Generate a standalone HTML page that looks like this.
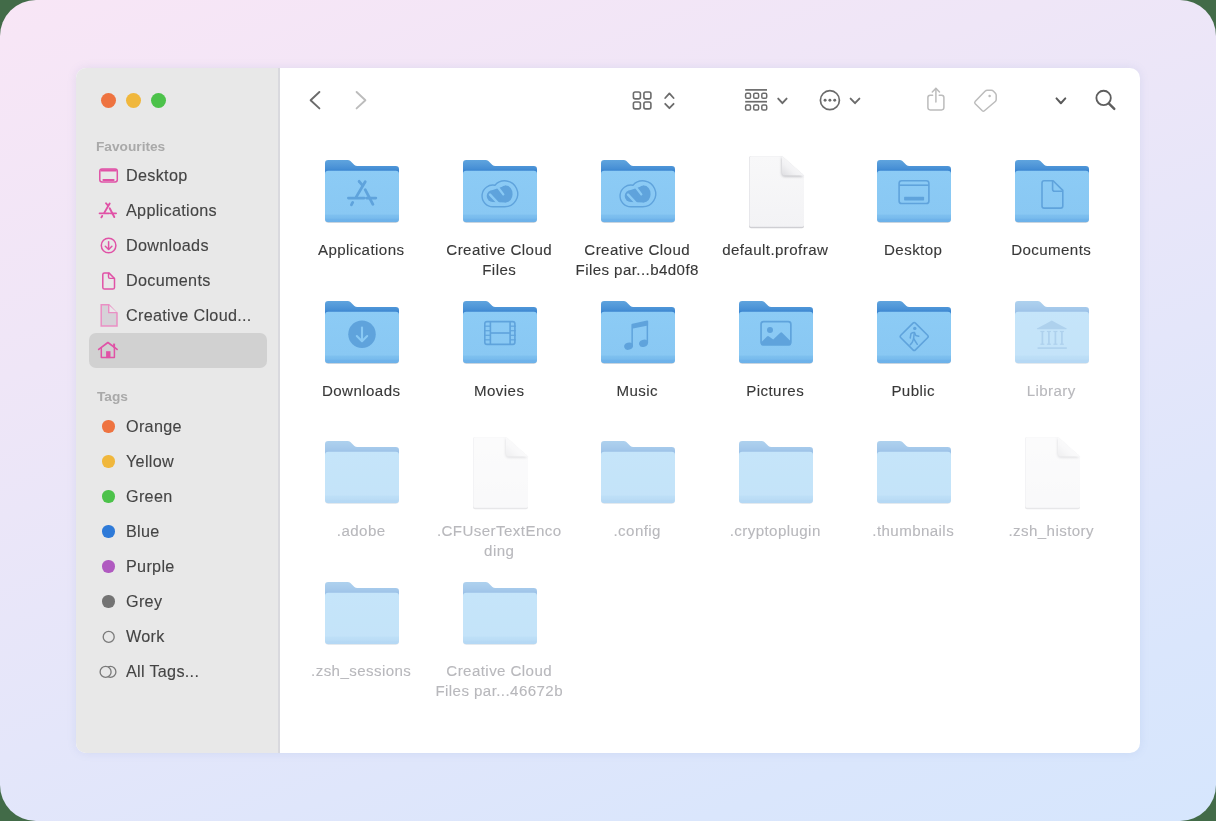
<!DOCTYPE html><html><head><meta charset="utf-8"><style>
html,body{margin:0;padding:0;width:1216px;height:821px;overflow:hidden;background:#426b48;font-family:"Liberation Sans",sans-serif;}
.bg{position:absolute;left:0;top:0;width:1216px;height:821px;border-radius:36px;background:linear-gradient(160deg,#f8e6f6 0%,#efe6f7 30%,#e4e6fa 60%,#dae6fc 85%,#d6e6fd 100%);}
.win{position:absolute;left:76px;top:68px;width:1064px;height:685px;border-radius:10px;overflow:hidden;background:#fff;box-shadow:0 0 10px rgba(100,120,185,0.13);}
.side{position:absolute;left:0;top:0;width:204px;height:685px;background:#e8e8e8;}
.a{position:absolute;}
.t{position:absolute;white-space:nowrap;will-change:transform;}
.sh{font-size:13.7px;font-weight:bold;color:#a9a9a9;line-height:20px;}
.si{font-size:16.2px;letter-spacing:0.3px;color:#444;line-height:20px;-webkit-text-stroke:0.12px #444;}
.lbl{width:160px;text-align:center;font-size:15.1px;letter-spacing:0.42px;text-indent:0.42px;line-height:20px;color:#383838;-webkit-text-stroke:0.12px #383838;}
.lbl.h{color:#b8b8bc;-webkit-text-stroke:0.12px #b8b8bc;}
svg{position:absolute;overflow:visible;}
</style></head><body>
<div class="bg"></div>
<div class="win">
<div class="side">
<div class="a" style="left:202.4px;top:0;width:1.8px;height:685px;background:#d9d9de;"></div>
<div class="a" style="left:25.0px;top:25.200000000000003px;width:15px;height:15px;border-radius:50%;background:#ee7340;"></div>
<div class="a" style="left:50.099999999999994px;top:25.200000000000003px;width:15px;height:15px;border-radius:50%;background:#f0b73c;"></div>
<div class="a" style="left:75.19999999999999px;top:25.200000000000003px;width:15px;height:15px;border-radius:50%;background:#4cc24a;"></div>
<div class="t sh" style="left:19.599999999999994px;top:68.95px;">Favourites</div>
<div class="t sh" style="left:20.5px;top:319.25px;">Tags</div>
<div class="a" style="left:12.599999999999994px;top:264.8px;width:178px;height:35px;border-radius:7px;background:#d1d1d1;"></div>
<div class="t si" style="left:49.900000000000006px;top:97.29px;">Desktop</div>
<div class="t si" style="left:49.900000000000006px;top:132.29px;">Applications</div>
<div class="t si" style="left:49.900000000000006px;top:167.29px;">Downloads</div>
<div class="t si" style="left:49.900000000000006px;top:202.29px;">Documents</div>
<div class="t si" style="left:49.900000000000006px;top:237.29px;">Creative Cloud...</div>
<div class="t si" style="left:49.900000000000006px;top:348.09px;">Orange</div>
<div class="a" style="left:26.39999999999999px;top:352.40px;width:12.4px;height:12.4px;border-radius:50%;background:#ee7340;"></div>
<div class="t si" style="left:49.900000000000006px;top:383.09px;">Yellow</div>
<div class="a" style="left:26.39999999999999px;top:387.40px;width:12.4px;height:12.4px;border-radius:50%;background:#f0b73c;"></div>
<div class="t si" style="left:49.900000000000006px;top:418.09px;">Green</div>
<div class="a" style="left:26.39999999999999px;top:422.40px;width:12.4px;height:12.4px;border-radius:50%;background:#4cc24a;"></div>
<div class="t si" style="left:49.900000000000006px;top:453.09px;">Blue</div>
<div class="a" style="left:26.39999999999999px;top:457.40px;width:12.4px;height:12.4px;border-radius:50%;background:#2e7ad8;"></div>
<div class="t si" style="left:49.900000000000006px;top:488.09px;">Purple</div>
<div class="a" style="left:26.39999999999999px;top:492.40px;width:12.4px;height:12.4px;border-radius:50%;background:#b05ac0;"></div>
<div class="t si" style="left:49.900000000000006px;top:523.09px;">Grey</div>
<div class="a" style="left:26.39999999999999px;top:527.40px;width:12.4px;height:12.4px;border-radius:50%;background:#737373;"></div>
<div class="t si" style="left:49.900000000000006px;top:558.09px;">Work</div>
<div class="t si" style="left:49.900000000000006px;top:593.09px;">All Tags...</div>
<svg style="left:-76px;top:-68px" width="1216" height="821" viewBox="0 0 1216 821"><g fill="none" stroke="#e052a6" stroke-linecap="round" stroke-linejoin="round"><rect x="99.8" y="169" width="17.5" height="12.9" rx="2.2" stroke-width="1.5"/><line x1="100.5" y1="170.4" x2="116.6" y2="170.4" stroke-width="2.2" stroke-linecap="butt"/><circle cx="108.6" cy="245.5" r="7.3" stroke-width="1.5"/><line x1="108.6" y1="241.8" x2="108.6" y2="249.3" stroke-width="1.5"/><path d="M105.3,246.3 L108.6,249.5 L111.9,246.3" stroke-width="1.5"/><path d="M102.8,274.6 Q102.8,272.9 104.5,272.9 H108.9 L114.5,278.5 V287.4 Q114.5,289.1 112.8,289.1 H104.5 Q102.8,289.1 102.8,287.4 Z" stroke-width="1.5"/><path d="M108.5,273.1 V277 Q108.5,278.4 109.9,278.4 H114.3" stroke-width="1.4"/><path d="M101.2,304.8 H108.8 L117,313.2 V326 H101.2 Z" fill="#d6d2d8" stroke="#ea8fc4" stroke-width="1.5" stroke-linejoin="miter"/><path d="M108.7,304.9 V312.6 H116.9" fill="#ebe7ea" stroke="#ea8fc4" stroke-width="1.4" stroke-linejoin="miter"/><path d="M98.7,349.4 L107.9,342.5 L117.1,349.4" stroke-width="1.7"/><path d="M101.3,348 V357.6 H114.4 V347.6" stroke-width="1.5"/><line x1="114.1" y1="343.6" x2="114.1" y2="347.6" stroke-width="2" stroke-linecap="butt"/></g><rect x="106.1" y="351.2" width="4.4" height="6.9" fill="#e052a6"/><rect x="102.4" y="178.9" width="12.2" height="2.1" rx="1" fill="#e052a6"/><g transform="translate(99.6,203.2) scale(0.6) translate(-23.4,-21.2)" stroke="#e052a6" stroke-width="3.2" stroke-linecap="round" fill="none"><line x1="40.2" y1="21.7" x2="31.3" y2="36.9"/><line x1="34.1" y1="21.3" x2="37.1" y2="24.9"/><line x1="40.2" y1="29.7" x2="47.9" y2="44.3"/><line x1="23.4" y1="38.1" x2="39.2" y2="38.1"/><line x1="41.6" y1="38.1" x2="50.8" y2="38.1"/><line x1="27.7" y1="42.4" x2="26.4" y2="44.8"/></g><circle cx="108.7" cy="636.9" r="5.5" fill="none" stroke="#7a7a7a" stroke-width="1.3"/><circle cx="110.4" cy="671.9" r="5.5" fill="none" stroke="#7a7a7a" stroke-width="1.3"/><circle cx="105.6" cy="671.9" r="5.5" fill="#e8e8e8" stroke="#7a7a7a" stroke-width="1.3"/></svg>
</div>
<svg style="left:247px;top:90.4px;opacity:1.0" width="78" height="68" viewBox="-2 -2 78 68"><defs><linearGradient id="bk0" gradientUnits="userSpaceOnUse" x1="0" y1="0" x2="0" y2="11"><stop offset="0" stop-color="#5fa4de"/><stop offset="0.55" stop-color="#4f96d8"/><stop offset="0.8" stop-color="#468fd5"/><stop offset="1" stop-color="#3a84d0"/></linearGradient><linearGradient id="bd0" x1="0" y1="0" x2="0" y2="1"><stop offset="0" stop-color="#8ccbf5"/><stop offset="0.84" stop-color="#89c8f3"/><stop offset="0.86" stop-color="#7ec0ef"/><stop offset="0.92" stop-color="#78bbed"/><stop offset="0.94" stop-color="#6fb3ea"/><stop offset="1" stop-color="#6cb1e9"/></linearGradient></defs><rect x="0.3" y="11.6" width="73.4" height="51.4" rx="3.2" fill="#b9a79b" opacity="0.35"/><path d="M0,3.2 Q0,0 3.2,0 H22.6 Q24.2,0 25.4,1 L29.4,4.9 Q30.6,6 32.2,6 H70.8 Q74,6 74,9.2 V30 H0 Z" fill="url(#bk0)"/><rect x="0" y="10.8" width="74" height="51.5" rx="3.2" fill="url(#bd0)"/><g stroke="#5fa3dc" stroke-width="2.8" stroke-linecap="round" fill="none"><line x1="40.2" y1="21.7" x2="31.3" y2="36.9"/><line x1="34.1" y1="21.3" x2="37.1" y2="24.9"/><line x1="40.2" y1="29.7" x2="47.9" y2="44.3"/><line x1="23.4" y1="38.1" x2="39.2" y2="38.1"/><line x1="41.6" y1="38.1" x2="50.8" y2="38.1"/><line x1="27.7" y1="42.4" x2="26.4" y2="44.8"/></g></svg>
<div class="t lbl" style="left:205.00px;top:172.07px;">Applications</div>
<svg style="left:385px;top:90.4px;opacity:1.0" width="78" height="68" viewBox="-2 -2 78 68"><defs><linearGradient id="bk1" gradientUnits="userSpaceOnUse" x1="0" y1="0" x2="0" y2="11"><stop offset="0" stop-color="#5fa4de"/><stop offset="0.55" stop-color="#4f96d8"/><stop offset="0.8" stop-color="#468fd5"/><stop offset="1" stop-color="#3a84d0"/></linearGradient><linearGradient id="bd1" x1="0" y1="0" x2="0" y2="1"><stop offset="0" stop-color="#8ccbf5"/><stop offset="0.84" stop-color="#89c8f3"/><stop offset="0.86" stop-color="#7ec0ef"/><stop offset="0.92" stop-color="#78bbed"/><stop offset="0.94" stop-color="#6fb3ea"/><stop offset="1" stop-color="#6cb1e9"/></linearGradient></defs><rect x="0.3" y="11.6" width="73.4" height="51.4" rx="3.2" fill="#b9a79b" opacity="0.35"/><path d="M0,3.2 Q0,0 3.2,0 H22.6 Q24.2,0 25.4,1 L29.4,4.9 Q30.6,6 32.2,6 H70.8 Q74,6 74,9.2 V30 H0 Z" fill="url(#bk1)"/><rect x="0" y="10.8" width="74" height="51.5" rx="3.2" fill="url(#bd1)"/><g><path d="M29.9,46.8 A10.9 10.9 0 1 1 31.96,25.19 A13 13 0 1 1 41.7,46.8 Z" fill="none" stroke="#5fa3dc" stroke-width="1.4" stroke-linejoin="round"/><path d="M29.7,30.1 L42.85,25.5 L42.85,42.5 L29.7,42.1 Z" fill="#5fa3dc"/><circle cx="29.7" cy="36.1" r="6" fill="#5fa3dc"/><ellipse cx="42.85" cy="34" rx="6.75" ry="8.5" fill="#5fa3dc"/><line x1="27" y1="34.7" x2="36.3" y2="44.5" stroke="#89c9f4" stroke-width="2.5" stroke-linecap="round"/><line x1="34.1" y1="26.2" x2="40.3" y2="34.4" stroke="#89c9f4" stroke-width="2.3" stroke-linecap="round"/></g></svg>
<div class="t lbl" style="left:343.00px;top:172.07px;">Creative Cloud</div>
<div class="t lbl" style="left:343.00px;top:191.87px;">Files</div>
<svg style="left:523px;top:90.4px;opacity:1.0" width="78" height="68" viewBox="-2 -2 78 68"><defs><linearGradient id="bk2" gradientUnits="userSpaceOnUse" x1="0" y1="0" x2="0" y2="11"><stop offset="0" stop-color="#5fa4de"/><stop offset="0.55" stop-color="#4f96d8"/><stop offset="0.8" stop-color="#468fd5"/><stop offset="1" stop-color="#3a84d0"/></linearGradient><linearGradient id="bd2" x1="0" y1="0" x2="0" y2="1"><stop offset="0" stop-color="#8ccbf5"/><stop offset="0.84" stop-color="#89c8f3"/><stop offset="0.86" stop-color="#7ec0ef"/><stop offset="0.92" stop-color="#78bbed"/><stop offset="0.94" stop-color="#6fb3ea"/><stop offset="1" stop-color="#6cb1e9"/></linearGradient></defs><rect x="0.3" y="11.6" width="73.4" height="51.4" rx="3.2" fill="#b9a79b" opacity="0.35"/><path d="M0,3.2 Q0,0 3.2,0 H22.6 Q24.2,0 25.4,1 L29.4,4.9 Q30.6,6 32.2,6 H70.8 Q74,6 74,9.2 V30 H0 Z" fill="url(#bk2)"/><rect x="0" y="10.8" width="74" height="51.5" rx="3.2" fill="url(#bd2)"/><g><path d="M29.9,46.8 A10.9 10.9 0 1 1 31.96,25.19 A13 13 0 1 1 41.7,46.8 Z" fill="none" stroke="#5fa3dc" stroke-width="1.4" stroke-linejoin="round"/><path d="M29.7,30.1 L42.85,25.5 L42.85,42.5 L29.7,42.1 Z" fill="#5fa3dc"/><circle cx="29.7" cy="36.1" r="6" fill="#5fa3dc"/><ellipse cx="42.85" cy="34" rx="6.75" ry="8.5" fill="#5fa3dc"/><line x1="27" y1="34.7" x2="36.3" y2="44.5" stroke="#89c9f4" stroke-width="2.5" stroke-linecap="round"/><line x1="34.1" y1="26.2" x2="40.3" y2="34.4" stroke="#89c9f4" stroke-width="2.3" stroke-linecap="round"/></g></svg>
<div class="t lbl" style="left:481.00px;top:172.07px;">Creative Cloud</div>
<div class="t lbl" style="left:481.00px;top:191.87px;">Files par...b4d0f8</div>
<svg style="left:668.5px;top:84.0px;opacity:1.0" width="63" height="79.2" viewBox="-4 -4 63 79.2"><defs><linearGradient id="pg3" x1="0" y1="0" x2="0" y2="1"><stop offset="0" stop-color="#f8f8f9"/><stop offset="1" stop-color="#f3f3f5"/></linearGradient><linearGradient id="fd3" x1="0" y1="1" x2="1" y2="0"><stop offset="0" stop-color="#dedee1"/><stop offset="0.35" stop-color="#f2f2f4"/><stop offset="1" stop-color="#ffffff"/></linearGradient><filter id="bl3" x="-50%" y="-50%" width="200%" height="200%"><feGaussianBlur stdDeviation="1.1"/></filter><filter id="bs3" x="-20%" y="-20%" width="140%" height="140%"><feGaussianBlur stdDeviation="0.5"/></filter></defs><path d="M2,1 H33 L55,20.6 V70.2 Q55,72.2 53,72.2 H2 Q0,72.2 0,70.2 V3 Q0,1 2,1 Z" fill="#c4c4c9" opacity="0.8" filter="url(#bs3)"/><path d="M2,0 H33 L55,19.6 V69 Q55,71 53,71 H2 Q0,71 0,69 V2 Q0,0 2,0 Z" fill="#e4e4e8"/><path d="M2.2,0.2 H33 L55,19.8 V69 Q55,70.6 53.4,70.6 H2.4 Q0.8,70.6 0.8,69 V2 Q0.8,0.2 2.2,0.2 Z" fill="url(#pg3)"/><path d="M33,0 V16 Q33,20 37,20 H55 Z" fill="#70707a" opacity="0.35" filter="url(#bl3)" transform="translate(-0.6,1)"/><path d="M33,0 V16.4 Q33,19.6 36.2,19.6 H55 Z" fill="url(#fd3)"/></svg>
<div class="t lbl" style="left:619.00px;top:172.07px;">default.profraw</div>
<svg style="left:799px;top:90.4px;opacity:1.0" width="78" height="68" viewBox="-2 -2 78 68"><defs><linearGradient id="bk4" gradientUnits="userSpaceOnUse" x1="0" y1="0" x2="0" y2="11"><stop offset="0" stop-color="#5fa4de"/><stop offset="0.55" stop-color="#4f96d8"/><stop offset="0.8" stop-color="#468fd5"/><stop offset="1" stop-color="#3a84d0"/></linearGradient><linearGradient id="bd4" x1="0" y1="0" x2="0" y2="1"><stop offset="0" stop-color="#8ccbf5"/><stop offset="0.84" stop-color="#89c8f3"/><stop offset="0.86" stop-color="#7ec0ef"/><stop offset="0.92" stop-color="#78bbed"/><stop offset="0.94" stop-color="#6fb3ea"/><stop offset="1" stop-color="#6cb1e9"/></linearGradient></defs><rect x="0.3" y="11.6" width="73.4" height="51.4" rx="3.2" fill="#b9a79b" opacity="0.35"/><path d="M0,3.2 Q0,0 3.2,0 H22.6 Q24.2,0 25.4,1 L29.4,4.9 Q30.6,6 32.2,6 H70.8 Q74,6 74,9.2 V30 H0 Z" fill="url(#bk4)"/><rect x="0" y="10.8" width="74" height="51.5" rx="3.2" fill="url(#bd4)"/><g fill="none" stroke="#5fa3dc" stroke-width="1.6"><rect x="22.1" y="20.8" width="29.8" height="22.7" rx="2.6"/><line x1="22.1" y1="25.2" x2="51.9" y2="25.2"/></g><rect x="27.1" y="36.8" width="20" height="3.6" rx="0.6" fill="#5fa3dc"/></svg>
<div class="t lbl" style="left:757.00px;top:172.07px;">Desktop</div>
<svg style="left:937px;top:90.4px;opacity:1.0" width="78" height="68" viewBox="-2 -2 78 68"><defs><linearGradient id="bk5" gradientUnits="userSpaceOnUse" x1="0" y1="0" x2="0" y2="11"><stop offset="0" stop-color="#5fa4de"/><stop offset="0.55" stop-color="#4f96d8"/><stop offset="0.8" stop-color="#468fd5"/><stop offset="1" stop-color="#3a84d0"/></linearGradient><linearGradient id="bd5" x1="0" y1="0" x2="0" y2="1"><stop offset="0" stop-color="#8ccbf5"/><stop offset="0.84" stop-color="#89c8f3"/><stop offset="0.86" stop-color="#7ec0ef"/><stop offset="0.92" stop-color="#78bbed"/><stop offset="0.94" stop-color="#6fb3ea"/><stop offset="1" stop-color="#6cb1e9"/></linearGradient></defs><rect x="0.3" y="11.6" width="73.4" height="51.4" rx="3.2" fill="#b9a79b" opacity="0.35"/><path d="M0,3.2 Q0,0 3.2,0 H22.6 Q24.2,0 25.4,1 L29.4,4.9 Q30.6,6 32.2,6 H70.8 Q74,6 74,9.2 V30 H0 Z" fill="url(#bk5)"/><rect x="0" y="10.8" width="74" height="51.5" rx="3.2" fill="url(#bd5)"/><g fill="none" stroke="#5fa3dc" stroke-width="1.6" stroke-linejoin="round"><path d="M27,23 Q27,20.8 29.2,20.8 H38.1 L47.8,30.4 V45.9 Q47.8,48.1 45.6,48.1 H29.2 Q27,48.1 27,45.9 Z"/><path d="M37.6,21 V29.2 Q37.6,31.2 39.6,31.2 H47.6"/></g></svg>
<div class="t lbl" style="left:895.00px;top:172.07px;">Documents</div>
<svg style="left:247px;top:231.0px;opacity:1.0" width="78" height="68" viewBox="-2 -2 78 68"><defs><linearGradient id="bk6" gradientUnits="userSpaceOnUse" x1="0" y1="0" x2="0" y2="11"><stop offset="0" stop-color="#5fa4de"/><stop offset="0.55" stop-color="#4f96d8"/><stop offset="0.8" stop-color="#468fd5"/><stop offset="1" stop-color="#3a84d0"/></linearGradient><linearGradient id="bd6" x1="0" y1="0" x2="0" y2="1"><stop offset="0" stop-color="#8ccbf5"/><stop offset="0.84" stop-color="#89c8f3"/><stop offset="0.86" stop-color="#7ec0ef"/><stop offset="0.92" stop-color="#78bbed"/><stop offset="0.94" stop-color="#6fb3ea"/><stop offset="1" stop-color="#6cb1e9"/></linearGradient></defs><rect x="0.3" y="11.6" width="73.4" height="51.4" rx="3.2" fill="#b9a79b" opacity="0.35"/><path d="M0,3.2 Q0,0 3.2,0 H22.6 Q24.2,0 25.4,1 L29.4,4.9 Q30.6,6 32.2,6 H70.8 Q74,6 74,9.2 V30 H0 Z" fill="url(#bk6)"/><rect x="0" y="10.8" width="74" height="51.5" rx="3.2" fill="url(#bd6)"/><circle cx="37" cy="33.2" r="13.75" fill="#5fa3dc"/><g stroke="#89c9f4" stroke-width="2.1" stroke-linecap="round" stroke-linejoin="round" fill="none"><line x1="37" y1="26.5" x2="37" y2="39.5"/><path d="M31.8,35 L37,40.2 L42.2,35"/></g></svg>
<div class="t lbl" style="left:205.00px;top:312.67px;">Downloads</div>
<svg style="left:385px;top:231.0px;opacity:1.0" width="78" height="68" viewBox="-2 -2 78 68"><defs><linearGradient id="bk7" gradientUnits="userSpaceOnUse" x1="0" y1="0" x2="0" y2="11"><stop offset="0" stop-color="#5fa4de"/><stop offset="0.55" stop-color="#4f96d8"/><stop offset="0.8" stop-color="#468fd5"/><stop offset="1" stop-color="#3a84d0"/></linearGradient><linearGradient id="bd7" x1="0" y1="0" x2="0" y2="1"><stop offset="0" stop-color="#8ccbf5"/><stop offset="0.84" stop-color="#89c8f3"/><stop offset="0.86" stop-color="#7ec0ef"/><stop offset="0.92" stop-color="#78bbed"/><stop offset="0.94" stop-color="#6fb3ea"/><stop offset="1" stop-color="#6cb1e9"/></linearGradient></defs><rect x="0.3" y="11.6" width="73.4" height="51.4" rx="3.2" fill="#b9a79b" opacity="0.35"/><path d="M0,3.2 Q0,0 3.2,0 H22.6 Q24.2,0 25.4,1 L29.4,4.9 Q30.6,6 32.2,6 H70.8 Q74,6 74,9.2 V30 H0 Z" fill="url(#bk7)"/><rect x="0" y="10.8" width="74" height="51.5" rx="3.2" fill="url(#bd7)"/><g fill="none" stroke="#5fa3dc" stroke-width="1.6"><rect x="21.8" y="20.6" width="30.1" height="22.8" rx="2.2"/><line x1="27.4" y1="20.6" x2="27.4" y2="43.4"/><line x1="47.1" y1="20.6" x2="47.1" y2="43.4"/><line x1="27.4" y1="32" x2="47.1" y2="32"/></g><g stroke="#5fa3dc" stroke-width="1.2"><line x1="21.8" y1="25.16" x2="27.4" y2="25.16"/><line x1="47.1" y1="25.16" x2="52.7" y2="25.16"/><line x1="21.8" y1="29.72" x2="27.4" y2="29.72"/><line x1="47.1" y1="29.72" x2="52.7" y2="29.72"/><line x1="21.8" y1="34.28" x2="27.4" y2="34.28"/><line x1="47.1" y1="34.28" x2="52.7" y2="34.28"/><line x1="21.8" y1="38.84" x2="27.4" y2="38.84"/><line x1="47.1" y1="38.84" x2="52.7" y2="38.84"/></g></svg>
<div class="t lbl" style="left:343.00px;top:312.67px;">Movies</div>
<svg style="left:523px;top:231.0px;opacity:1.0" width="78" height="68" viewBox="-2 -2 78 68"><defs><linearGradient id="bk8" gradientUnits="userSpaceOnUse" x1="0" y1="0" x2="0" y2="11"><stop offset="0" stop-color="#5fa4de"/><stop offset="0.55" stop-color="#4f96d8"/><stop offset="0.8" stop-color="#468fd5"/><stop offset="1" stop-color="#3a84d0"/></linearGradient><linearGradient id="bd8" x1="0" y1="0" x2="0" y2="1"><stop offset="0" stop-color="#8ccbf5"/><stop offset="0.84" stop-color="#89c8f3"/><stop offset="0.86" stop-color="#7ec0ef"/><stop offset="0.92" stop-color="#78bbed"/><stop offset="0.94" stop-color="#6fb3ea"/><stop offset="1" stop-color="#6cb1e9"/></linearGradient></defs><rect x="0.3" y="11.6" width="73.4" height="51.4" rx="3.2" fill="#b9a79b" opacity="0.35"/><path d="M0,3.2 Q0,0 3.2,0 H22.6 Q24.2,0 25.4,1 L29.4,4.9 Q30.6,6 32.2,6 H70.8 Q74,6 74,9.2 V30 H0 Z" fill="url(#bk8)"/><rect x="0" y="10.8" width="74" height="51.5" rx="3.2" fill="url(#bd8)"/><g fill="#5fa3dc"><path d="M30.4,23.8 Q30.4,22.9 31.3,22.7 L46,19.6 Q47.1,19.4 47.1,20.5 V24.4 L31.9,27.6 V44 H30.4 Z"/><rect x="45.6" y="20" width="1.5" height="22"/><ellipse cx="27.6" cy="45.2" rx="4.5" ry="3.5" transform="rotate(-18 27.6 45.2)"/><ellipse cx="42.5" cy="42.3" rx="4.5" ry="3.5" transform="rotate(-18 42.5 42.3)"/></g></svg>
<div class="t lbl" style="left:481.00px;top:312.67px;">Music</div>
<svg style="left:661px;top:231.0px;opacity:1.0" width="78" height="68" viewBox="-2 -2 78 68"><defs><linearGradient id="bk9" gradientUnits="userSpaceOnUse" x1="0" y1="0" x2="0" y2="11"><stop offset="0" stop-color="#5fa4de"/><stop offset="0.55" stop-color="#4f96d8"/><stop offset="0.8" stop-color="#468fd5"/><stop offset="1" stop-color="#3a84d0"/></linearGradient><linearGradient id="bd9" x1="0" y1="0" x2="0" y2="1"><stop offset="0" stop-color="#8ccbf5"/><stop offset="0.84" stop-color="#89c8f3"/><stop offset="0.86" stop-color="#7ec0ef"/><stop offset="0.92" stop-color="#78bbed"/><stop offset="0.94" stop-color="#6fb3ea"/><stop offset="1" stop-color="#6cb1e9"/></linearGradient></defs><rect x="0.3" y="11.6" width="73.4" height="51.4" rx="3.2" fill="#b9a79b" opacity="0.35"/><path d="M0,3.2 Q0,0 3.2,0 H22.6 Q24.2,0 25.4,1 L29.4,4.9 Q30.6,6 32.2,6 H70.8 Q74,6 74,9.2 V30 H0 Z" fill="url(#bk9)"/><rect x="0" y="10.8" width="74" height="51.5" rx="3.2" fill="url(#bd9)"/><rect x="22.05" y="20.65" width="29.8" height="23" rx="2.6" fill="none" stroke="#5fa3dc" stroke-width="1.7"/><circle cx="31" cy="29" r="3" fill="#5fa3dc"/><path d="M22,41.5 L28,35.6 Q29,34.7 30,35.5 L34.2,38.6 L41.3,31.7 Q42.2,30.9 43.1,31.7 L52,40.4 V43 Q52,44.5 50.5,44.5 H23.5 Q22,44.5 22,43 Z" fill="#5fa3dc"/></svg>
<div class="t lbl" style="left:619.00px;top:312.67px;">Pictures</div>
<svg style="left:799px;top:231.0px;opacity:1.0" width="78" height="68" viewBox="-2 -2 78 68"><defs><linearGradient id="bk10" gradientUnits="userSpaceOnUse" x1="0" y1="0" x2="0" y2="11"><stop offset="0" stop-color="#5fa4de"/><stop offset="0.55" stop-color="#4f96d8"/><stop offset="0.8" stop-color="#468fd5"/><stop offset="1" stop-color="#3a84d0"/></linearGradient><linearGradient id="bd10" x1="0" y1="0" x2="0" y2="1"><stop offset="0" stop-color="#8ccbf5"/><stop offset="0.84" stop-color="#89c8f3"/><stop offset="0.86" stop-color="#7ec0ef"/><stop offset="0.92" stop-color="#78bbed"/><stop offset="0.94" stop-color="#6fb3ea"/><stop offset="1" stop-color="#6cb1e9"/></linearGradient></defs><rect x="0.3" y="11.6" width="73.4" height="51.4" rx="3.2" fill="#b9a79b" opacity="0.35"/><path d="M0,3.2 Q0,0 3.2,0 H22.6 Q24.2,0 25.4,1 L29.4,4.9 Q30.6,6 32.2,6 H70.8 Q74,6 74,9.2 V30 H0 Z" fill="url(#bk10)"/><rect x="0" y="10.8" width="74" height="51.5" rx="3.2" fill="url(#bd10)"/><path d="M36,22.1 Q37.2,20.9 38.4,22.1 L50.6,34.3 Q51.8,35.5 50.6,36.7 L38.4,48.9 Q37.2,50.1 36,48.9 L23.8,36.7 Q22.6,35.5 23.8,34.3 Z" fill="none" stroke="#5fa3dc" stroke-width="1.6"/><circle cx="37.8" cy="27.4" r="1.7" fill="#5fa3dc"/><g fill="none" stroke="#5fa3dc" stroke-width="1.5" stroke-linecap="round" stroke-linejoin="round"><path d="M33.2,37 L34,32.6 Q36,31 37.5,31.5 L38.8,34.5 L41.8,35.2"/><path d="M37.3,31.8 L36.6,37.5 L40.3,43.3"/><path d="M36.6,37.8 L35.3,41.2 L33.3,43.8"/></g></svg>
<div class="t lbl" style="left:757.00px;top:312.67px;">Public</div>
<svg style="left:937px;top:231.0px;opacity:0.5" width="78" height="68" viewBox="-2 -2 78 68"><defs><linearGradient id="bk11" gradientUnits="userSpaceOnUse" x1="0" y1="0" x2="0" y2="11"><stop offset="0" stop-color="#5fa4de"/><stop offset="0.55" stop-color="#4f96d8"/><stop offset="0.8" stop-color="#468fd5"/><stop offset="1" stop-color="#3a84d0"/></linearGradient><linearGradient id="bd11" x1="0" y1="0" x2="0" y2="1"><stop offset="0" stop-color="#8ccbf5"/><stop offset="0.84" stop-color="#89c8f3"/><stop offset="0.86" stop-color="#7ec0ef"/><stop offset="0.92" stop-color="#78bbed"/><stop offset="0.94" stop-color="#6fb3ea"/><stop offset="1" stop-color="#6cb1e9"/></linearGradient></defs><rect x="0.3" y="11.6" width="73.4" height="51.4" rx="3.2" fill="#b9a79b" opacity="0.35"/><path d="M0,3.2 Q0,0 3.2,0 H22.6 Q24.2,0 25.4,1 L29.4,4.9 Q30.6,6 32.2,6 H70.8 Q74,6 74,9.2 V30 H0 Z" fill="url(#bk11)"/><rect x="0" y="10.8" width="74" height="51.5" rx="3.2" fill="url(#bd11)"/><g fill="#5fa3dc"><path d="M36.8,19.6 L51.7,27.6 Q51.9,28.2 51.3,28.3 H22.3 Q21.7,28.2 21.9,27.6 Z"/><rect x="26.55" y="30" width="1.7" height="13.5"/><rect x="25.40" y="29.9" width="4" height="1.2"/><rect x="25.40" y="42.6" width="4" height="1.2"/><rect x="33.05" y="30" width="1.7" height="13.5"/><rect x="31.90" y="29.9" width="4" height="1.2"/><rect x="31.90" y="42.6" width="4" height="1.2"/><rect x="39.55" y="30" width="1.7" height="13.5"/><rect x="38.40" y="29.9" width="4" height="1.2"/><rect x="38.40" y="42.6" width="4" height="1.2"/><rect x="46.05" y="30" width="1.7" height="13.5"/><rect x="44.90" y="29.9" width="4" height="1.2"/><rect x="44.90" y="42.6" width="4" height="1.2"/><rect x="22.6" y="46.3" width="29.2" height="1.6"/></g></svg>
<div class="t lbl h" style="left:895.00px;top:312.67px;">Library</div>
<svg style="left:247px;top:371.3px;opacity:0.5" width="78" height="68" viewBox="-2 -2 78 68"><defs><linearGradient id="bk12" gradientUnits="userSpaceOnUse" x1="0" y1="0" x2="0" y2="11"><stop offset="0" stop-color="#5fa4de"/><stop offset="0.55" stop-color="#4f96d8"/><stop offset="0.8" stop-color="#468fd5"/><stop offset="1" stop-color="#3a84d0"/></linearGradient><linearGradient id="bd12" x1="0" y1="0" x2="0" y2="1"><stop offset="0" stop-color="#8ccbf5"/><stop offset="0.84" stop-color="#89c8f3"/><stop offset="0.86" stop-color="#7ec0ef"/><stop offset="0.92" stop-color="#78bbed"/><stop offset="0.94" stop-color="#6fb3ea"/><stop offset="1" stop-color="#6cb1e9"/></linearGradient></defs><rect x="0.3" y="11.6" width="73.4" height="51.4" rx="3.2" fill="#b9a79b" opacity="0.35"/><path d="M0,3.2 Q0,0 3.2,0 H22.6 Q24.2,0 25.4,1 L29.4,4.9 Q30.6,6 32.2,6 H70.8 Q74,6 74,9.2 V30 H0 Z" fill="url(#bk12)"/><rect x="0" y="10.8" width="74" height="51.5" rx="3.2" fill="url(#bd12)"/></svg>
<div class="t lbl h" style="left:205.00px;top:452.97px;">.adobe</div>
<svg style="left:392.5px;top:364.90000000000003px;opacity:0.5" width="63" height="79.2" viewBox="-4 -4 63 79.2"><defs><linearGradient id="pg13" x1="0" y1="0" x2="0" y2="1"><stop offset="0" stop-color="#f8f8f9"/><stop offset="1" stop-color="#f3f3f5"/></linearGradient><linearGradient id="fd13" x1="0" y1="1" x2="1" y2="0"><stop offset="0" stop-color="#dedee1"/><stop offset="0.35" stop-color="#f2f2f4"/><stop offset="1" stop-color="#ffffff"/></linearGradient><filter id="bl13" x="-50%" y="-50%" width="200%" height="200%"><feGaussianBlur stdDeviation="1.1"/></filter><filter id="bs13" x="-20%" y="-20%" width="140%" height="140%"><feGaussianBlur stdDeviation="0.5"/></filter></defs><path d="M2,1 H33 L55,20.6 V70.2 Q55,72.2 53,72.2 H2 Q0,72.2 0,70.2 V3 Q0,1 2,1 Z" fill="#c4c4c9" opacity="0.8" filter="url(#bs13)"/><path d="M2,0 H33 L55,19.6 V69 Q55,71 53,71 H2 Q0,71 0,69 V2 Q0,0 2,0 Z" fill="#e4e4e8"/><path d="M2.2,0.2 H33 L55,19.8 V69 Q55,70.6 53.4,70.6 H2.4 Q0.8,70.6 0.8,69 V2 Q0.8,0.2 2.2,0.2 Z" fill="url(#pg13)"/><path d="M33,0 V16 Q33,20 37,20 H55 Z" fill="#70707a" opacity="0.35" filter="url(#bl13)" transform="translate(-0.6,1)"/><path d="M33,0 V16.4 Q33,19.6 36.2,19.6 H55 Z" fill="url(#fd13)"/></svg>
<div class="t lbl h" style="left:343.00px;top:452.97px;">.CFUserTextEnco</div>
<div class="t lbl h" style="left:343.00px;top:472.77px;">ding</div>
<svg style="left:523px;top:371.3px;opacity:0.5" width="78" height="68" viewBox="-2 -2 78 68"><defs><linearGradient id="bk14" gradientUnits="userSpaceOnUse" x1="0" y1="0" x2="0" y2="11"><stop offset="0" stop-color="#5fa4de"/><stop offset="0.55" stop-color="#4f96d8"/><stop offset="0.8" stop-color="#468fd5"/><stop offset="1" stop-color="#3a84d0"/></linearGradient><linearGradient id="bd14" x1="0" y1="0" x2="0" y2="1"><stop offset="0" stop-color="#8ccbf5"/><stop offset="0.84" stop-color="#89c8f3"/><stop offset="0.86" stop-color="#7ec0ef"/><stop offset="0.92" stop-color="#78bbed"/><stop offset="0.94" stop-color="#6fb3ea"/><stop offset="1" stop-color="#6cb1e9"/></linearGradient></defs><rect x="0.3" y="11.6" width="73.4" height="51.4" rx="3.2" fill="#b9a79b" opacity="0.35"/><path d="M0,3.2 Q0,0 3.2,0 H22.6 Q24.2,0 25.4,1 L29.4,4.9 Q30.6,6 32.2,6 H70.8 Q74,6 74,9.2 V30 H0 Z" fill="url(#bk14)"/><rect x="0" y="10.8" width="74" height="51.5" rx="3.2" fill="url(#bd14)"/></svg>
<div class="t lbl h" style="left:481.00px;top:452.97px;">.config</div>
<svg style="left:661px;top:371.3px;opacity:0.5" width="78" height="68" viewBox="-2 -2 78 68"><defs><linearGradient id="bk15" gradientUnits="userSpaceOnUse" x1="0" y1="0" x2="0" y2="11"><stop offset="0" stop-color="#5fa4de"/><stop offset="0.55" stop-color="#4f96d8"/><stop offset="0.8" stop-color="#468fd5"/><stop offset="1" stop-color="#3a84d0"/></linearGradient><linearGradient id="bd15" x1="0" y1="0" x2="0" y2="1"><stop offset="0" stop-color="#8ccbf5"/><stop offset="0.84" stop-color="#89c8f3"/><stop offset="0.86" stop-color="#7ec0ef"/><stop offset="0.92" stop-color="#78bbed"/><stop offset="0.94" stop-color="#6fb3ea"/><stop offset="1" stop-color="#6cb1e9"/></linearGradient></defs><rect x="0.3" y="11.6" width="73.4" height="51.4" rx="3.2" fill="#b9a79b" opacity="0.35"/><path d="M0,3.2 Q0,0 3.2,0 H22.6 Q24.2,0 25.4,1 L29.4,4.9 Q30.6,6 32.2,6 H70.8 Q74,6 74,9.2 V30 H0 Z" fill="url(#bk15)"/><rect x="0" y="10.8" width="74" height="51.5" rx="3.2" fill="url(#bd15)"/></svg>
<div class="t lbl h" style="left:619.00px;top:452.97px;">.cryptoplugin</div>
<svg style="left:799px;top:371.3px;opacity:0.5" width="78" height="68" viewBox="-2 -2 78 68"><defs><linearGradient id="bk16" gradientUnits="userSpaceOnUse" x1="0" y1="0" x2="0" y2="11"><stop offset="0" stop-color="#5fa4de"/><stop offset="0.55" stop-color="#4f96d8"/><stop offset="0.8" stop-color="#468fd5"/><stop offset="1" stop-color="#3a84d0"/></linearGradient><linearGradient id="bd16" x1="0" y1="0" x2="0" y2="1"><stop offset="0" stop-color="#8ccbf5"/><stop offset="0.84" stop-color="#89c8f3"/><stop offset="0.86" stop-color="#7ec0ef"/><stop offset="0.92" stop-color="#78bbed"/><stop offset="0.94" stop-color="#6fb3ea"/><stop offset="1" stop-color="#6cb1e9"/></linearGradient></defs><rect x="0.3" y="11.6" width="73.4" height="51.4" rx="3.2" fill="#b9a79b" opacity="0.35"/><path d="M0,3.2 Q0,0 3.2,0 H22.6 Q24.2,0 25.4,1 L29.4,4.9 Q30.6,6 32.2,6 H70.8 Q74,6 74,9.2 V30 H0 Z" fill="url(#bk16)"/><rect x="0" y="10.8" width="74" height="51.5" rx="3.2" fill="url(#bd16)"/></svg>
<div class="t lbl h" style="left:757.00px;top:452.97px;">.thumbnails</div>
<svg style="left:944.5px;top:364.90000000000003px;opacity:0.5" width="63" height="79.2" viewBox="-4 -4 63 79.2"><defs><linearGradient id="pg17" x1="0" y1="0" x2="0" y2="1"><stop offset="0" stop-color="#f8f8f9"/><stop offset="1" stop-color="#f3f3f5"/></linearGradient><linearGradient id="fd17" x1="0" y1="1" x2="1" y2="0"><stop offset="0" stop-color="#dedee1"/><stop offset="0.35" stop-color="#f2f2f4"/><stop offset="1" stop-color="#ffffff"/></linearGradient><filter id="bl17" x="-50%" y="-50%" width="200%" height="200%"><feGaussianBlur stdDeviation="1.1"/></filter><filter id="bs17" x="-20%" y="-20%" width="140%" height="140%"><feGaussianBlur stdDeviation="0.5"/></filter></defs><path d="M2,1 H33 L55,20.6 V70.2 Q55,72.2 53,72.2 H2 Q0,72.2 0,70.2 V3 Q0,1 2,1 Z" fill="#c4c4c9" opacity="0.8" filter="url(#bs17)"/><path d="M2,0 H33 L55,19.6 V69 Q55,71 53,71 H2 Q0,71 0,69 V2 Q0,0 2,0 Z" fill="#e4e4e8"/><path d="M2.2,0.2 H33 L55,19.8 V69 Q55,70.6 53.4,70.6 H2.4 Q0.8,70.6 0.8,69 V2 Q0.8,0.2 2.2,0.2 Z" fill="url(#pg17)"/><path d="M33,0 V16 Q33,20 37,20 H55 Z" fill="#70707a" opacity="0.35" filter="url(#bl17)" transform="translate(-0.6,1)"/><path d="M33,0 V16.4 Q33,19.6 36.2,19.6 H55 Z" fill="url(#fd17)"/></svg>
<div class="t lbl h" style="left:895.00px;top:452.97px;">.zsh_history</div>
<svg style="left:247px;top:511.70000000000005px;opacity:0.5" width="78" height="68" viewBox="-2 -2 78 68"><defs><linearGradient id="bk18" gradientUnits="userSpaceOnUse" x1="0" y1="0" x2="0" y2="11"><stop offset="0" stop-color="#5fa4de"/><stop offset="0.55" stop-color="#4f96d8"/><stop offset="0.8" stop-color="#468fd5"/><stop offset="1" stop-color="#3a84d0"/></linearGradient><linearGradient id="bd18" x1="0" y1="0" x2="0" y2="1"><stop offset="0" stop-color="#8ccbf5"/><stop offset="0.84" stop-color="#89c8f3"/><stop offset="0.86" stop-color="#7ec0ef"/><stop offset="0.92" stop-color="#78bbed"/><stop offset="0.94" stop-color="#6fb3ea"/><stop offset="1" stop-color="#6cb1e9"/></linearGradient></defs><rect x="0.3" y="11.6" width="73.4" height="51.4" rx="3.2" fill="#b9a79b" opacity="0.35"/><path d="M0,3.2 Q0,0 3.2,0 H22.6 Q24.2,0 25.4,1 L29.4,4.9 Q30.6,6 32.2,6 H70.8 Q74,6 74,9.2 V30 H0 Z" fill="url(#bk18)"/><rect x="0" y="10.8" width="74" height="51.5" rx="3.2" fill="url(#bd18)"/></svg>
<div class="t lbl h" style="left:205.00px;top:593.37px;">.zsh_sessions</div>
<svg style="left:385px;top:511.70000000000005px;opacity:0.5" width="78" height="68" viewBox="-2 -2 78 68"><defs><linearGradient id="bk19" gradientUnits="userSpaceOnUse" x1="0" y1="0" x2="0" y2="11"><stop offset="0" stop-color="#5fa4de"/><stop offset="0.55" stop-color="#4f96d8"/><stop offset="0.8" stop-color="#468fd5"/><stop offset="1" stop-color="#3a84d0"/></linearGradient><linearGradient id="bd19" x1="0" y1="0" x2="0" y2="1"><stop offset="0" stop-color="#8ccbf5"/><stop offset="0.84" stop-color="#89c8f3"/><stop offset="0.86" stop-color="#7ec0ef"/><stop offset="0.92" stop-color="#78bbed"/><stop offset="0.94" stop-color="#6fb3ea"/><stop offset="1" stop-color="#6cb1e9"/></linearGradient></defs><rect x="0.3" y="11.6" width="73.4" height="51.4" rx="3.2" fill="#b9a79b" opacity="0.35"/><path d="M0,3.2 Q0,0 3.2,0 H22.6 Q24.2,0 25.4,1 L29.4,4.9 Q30.6,6 32.2,6 H70.8 Q74,6 74,9.2 V30 H0 Z" fill="url(#bk19)"/><rect x="0" y="10.8" width="74" height="51.5" rx="3.2" fill="url(#bd19)"/></svg>
<div class="t lbl h" style="left:343.00px;top:593.37px;">Creative Cloud</div>
<div class="t lbl h" style="left:343.00px;top:613.17px;">Files par...46672b</div>
<svg style="left:-76px;top:-68px" width="1216" height="821" viewBox="0 0 1216 821"><g fill="none" stroke-linecap="round" stroke-linejoin="round"><path d="M319.4,92 L310.6,100.2 L319.4,108.4" stroke="#6b6b6b" stroke-width="1.9"/><path d="M356.6,92 L365.4,100.2 L356.6,108.4" stroke="#bcbcbc" stroke-width="1.9"/><rect x="633.4" y="92.0" width="7.0" height="6.9" rx="1.8" stroke="#6b6b6b" stroke-width="1.6"/><rect x="633.4" y="102.0" width="7.0" height="6.9" rx="1.8" stroke="#6b6b6b" stroke-width="1.6"/><rect x="643.9" y="92.0" width="7.0" height="6.9" rx="1.8" stroke="#6b6b6b" stroke-width="1.6"/><rect x="643.9" y="102.0" width="7.0" height="6.9" rx="1.8" stroke="#6b6b6b" stroke-width="1.6"/><path d="M665.2,98 L669.4,93.4 L673.6,98" stroke="#6b6b6b" stroke-width="1.8"/><path d="M665.2,103.8 L669.4,108.2 L673.6,103.8" stroke="#6b6b6b" stroke-width="1.8"/><line x1="745.2" y1="89.9" x2="767.0" y2="89.9" stroke="#6b6b6b" stroke-width="1.7" stroke-linecap="butt"/><line x1="745.2" y1="101.7" x2="767.0" y2="101.7" stroke="#6b6b6b" stroke-width="1.7" stroke-linecap="butt"/><rect x="745.6" y="93.3" width="4.9" height="5.0" rx="1.4" stroke="#6b6b6b" stroke-width="1.5"/><rect x="745.6" y="105.1" width="4.9" height="5.0" rx="1.4" stroke="#6b6b6b" stroke-width="1.5"/><rect x="753.7" y="93.3" width="4.9" height="5.0" rx="1.4" stroke="#6b6b6b" stroke-width="1.5"/><rect x="753.7" y="105.1" width="4.9" height="5.0" rx="1.4" stroke="#6b6b6b" stroke-width="1.5"/><rect x="761.8" y="93.3" width="4.9" height="5.0" rx="1.4" stroke="#6b6b6b" stroke-width="1.5"/><rect x="761.8" y="105.1" width="4.9" height="5.0" rx="1.4" stroke="#6b6b6b" stroke-width="1.5"/><path d="M778.2,98.6 L782.4,103.2 L786.6,98.6" stroke="#6b6b6b" stroke-width="1.9"/><circle cx="829.9" cy="100.2" r="9.5" stroke="#6b6b6b" stroke-width="1.7"/><path d="M850.6,98.6 L855,103.2 L859.4,98.6" stroke="#6b6b6b" stroke-width="1.9"/><path d="M932.6,95.2 H930.2 Q927.9,95.2 927.9,97.5 V107.6 Q927.9,109.9 930.2,109.9 H941.6 Q943.9,109.9 943.9,107.6 V97.5 Q943.9,95.2 941.6,95.2 H939.2" stroke="#bcbcbc" stroke-width="1.5"/><line x1="935.9" y1="88.6" x2="935.9" y2="101.9" stroke="#bcbcbc" stroke-width="1.5"/><path d="M932.3,92 L935.9,88.4 L939.5,92" stroke="#bcbcbc" stroke-width="1.5"/><path d="M975.1,101.6 L985,91.2 Q986,90.3 987.3,90.3 H991.3 Q992.6,90.3 993.5,91.2 L995.4,93.2 Q996.2,94.1 996.2,95.3 V99.4 Q996.2,100.7 995.3,101.5 L984.4,110.8 Q983.3,111.7 982.3,110.8 L975.2,103.8 Q974.2,102.7 975.1,101.6 Z" stroke="#bcbcbc" stroke-width="1.5"/></g><circle cx="989.6" cy="96.1" r="1.25" fill="#bcbcbc"/><circle cx="825.1" cy="100.2" r="1.45" fill="#6b6b6b"/><circle cx="829.9" cy="100.2" r="1.45" fill="#6b6b6b"/><circle cx="834.7" cy="100.2" r="1.45" fill="#6b6b6b"/><path d="M1056.5,98.4 L1060.9,103.2 L1065.3,98.4" fill="none" stroke="#5a5a5a" stroke-width="2" stroke-linecap="round" stroke-linejoin="round"/><circle cx="1103.6" cy="97.9" r="7.2" fill="none" stroke="#5e5e5e" stroke-width="1.85"/><line x1="1109" y1="103.6" x2="1114.3" y2="108.9" stroke="#5e5e5e" stroke-width="2.4" stroke-linecap="round"/></svg>
</div>
</body></html>
